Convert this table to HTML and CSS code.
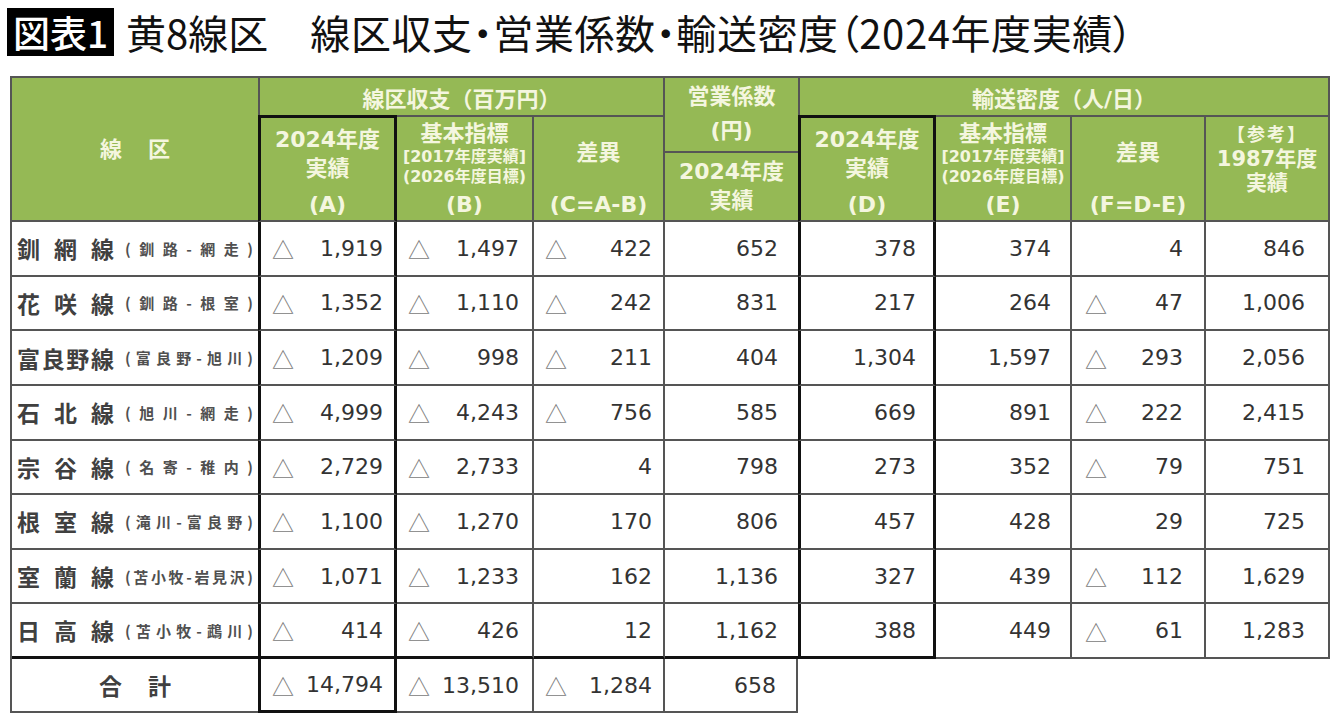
FILE: index.html
```html
<!DOCTYPE html>
<html lang="ja">
<head>
<meta charset="utf-8">
<title>黄8線区 線区収支・営業係数・輸送密度</title>
<link rel="stylesheet" href="styles.css">
</head>
<body>
<div class="title">
  <span class="badge">図表1</span>
  <span class="ttl">黄8線区<span class="ttl-gap">線区収支・営業係数・輸送密度（2024年度実績）</span></span>
</div>

<div class="grid">
  <div class="h h-sen"><span>線</span><span>区</span></div>
  <div class="h h-shushi">線区収支（百万円）</div>
  <div class="h h-eig1"><span class="l1">営業係数</span><span class="l1">(円)</span></div>
  <div class="h h-yuso">輸送密度（人/日）</div>

  <div class="h h-a"><span class="l">2024年度</span><span class="l">実績</span><span class="x">(A)</span></div>
  <div class="h h-b"><span class="l2">基本指標</span><span class="s">[2017年度実績]</span><span class="s">(2026年度目標)</span><span class="x">(B)</span></div>
  <div class="h h-c"><span class="l3">差異</span><span class="x">(C=A-B)</span></div>
  <div class="h h-eig2"><span class="l">2024年度</span><span class="l">実績</span></div>
  <div class="h h-d"><span class="l">2024年度</span><span class="l">実績</span><span class="x">(D)</span></div>
  <div class="h h-e"><span class="l2">基本指標</span><span class="s">[2017年度実績]</span><span class="s">(2026年度目標)</span><span class="x">(E)</span></div>
  <div class="h h-f"><span class="l3">差異</span><span class="x">(F=D-E)</span></div>
  <div class="h h-ref"><span class="s2">【参考】</span><span class="l4">1987年度</span><span class="l4">実績</span></div>

  <!-- 釧網線 -->
  <div class="lab"><span class="nm"><span>釧</span><span>網</span><span>線</span></span><span class="sub"><span>(</span><span>釧</span><span>路</span><span>-</span><span>網</span><span>走</span><span>)</span></span></div>
  <div class="c ka"><span class="tri">△</span><span class="n">1,919</span></div>
  <div class="c kb"><span class="tri">△</span><span class="n">1,497</span></div>
  <div class="c kc"><span class="tri">△</span><span class="n">422</span></div>
  <div class="c ke"><span class="n">652</span></div>
  <div class="c kd"><span class="n">378</span></div>
  <div class="c kee"><span class="n">374</span></div>
  <div class="c kf"><span class="n">4</span></div>
  <div class="c kr"><span class="n">846</span></div>

  <!-- 花咲線 -->
  <div class="lab"><span class="nm"><span>花</span><span>咲</span><span>線</span></span><span class="sub"><span>(</span><span>釧</span><span>路</span><span>-</span><span>根</span><span>室</span><span>)</span></span></div>
  <div class="c ka"><span class="tri">△</span><span class="n">1,352</span></div>
  <div class="c kb"><span class="tri">△</span><span class="n">1,110</span></div>
  <div class="c kc"><span class="tri">△</span><span class="n">242</span></div>
  <div class="c ke"><span class="n">831</span></div>
  <div class="c kd"><span class="n">217</span></div>
  <div class="c kee"><span class="n">264</span></div>
  <div class="c kf"><span class="tri">△</span><span class="n">47</span></div>
  <div class="c kr"><span class="n">1,006</span></div>

  <!-- 富良野線 -->
  <div class="lab"><span class="nm"><span>富</span><span>良</span><span>野</span><span>線</span></span><span class="sub"><span>(</span><span>富</span><span>良</span><span>野</span><span>-</span><span>旭</span><span>川</span><span>)</span></span></div>
  <div class="c ka"><span class="tri">△</span><span class="n">1,209</span></div>
  <div class="c kb"><span class="tri">△</span><span class="n">998</span></div>
  <div class="c kc"><span class="tri">△</span><span class="n">211</span></div>
  <div class="c ke"><span class="n">404</span></div>
  <div class="c kd"><span class="n">1,304</span></div>
  <div class="c kee"><span class="n">1,597</span></div>
  <div class="c kf"><span class="tri">△</span><span class="n">293</span></div>
  <div class="c kr"><span class="n">2,056</span></div>

  <!-- 石北線 -->
  <div class="lab"><span class="nm"><span>石</span><span>北</span><span>線</span></span><span class="sub"><span>(</span><span>旭</span><span>川</span><span>-</span><span>網</span><span>走</span><span>)</span></span></div>
  <div class="c ka"><span class="tri">△</span><span class="n">4,999</span></div>
  <div class="c kb"><span class="tri">△</span><span class="n">4,243</span></div>
  <div class="c kc"><span class="tri">△</span><span class="n">756</span></div>
  <div class="c ke"><span class="n">585</span></div>
  <div class="c kd"><span class="n">669</span></div>
  <div class="c kee"><span class="n">891</span></div>
  <div class="c kf"><span class="tri">△</span><span class="n">222</span></div>
  <div class="c kr"><span class="n">2,415</span></div>

  <!-- 宗谷線 -->
  <div class="lab"><span class="nm"><span>宗</span><span>谷</span><span>線</span></span><span class="sub"><span>(</span><span>名</span><span>寄</span><span>-</span><span>稚</span><span>内</span><span>)</span></span></div>
  <div class="c ka"><span class="tri">△</span><span class="n">2,729</span></div>
  <div class="c kb"><span class="tri">△</span><span class="n">2,733</span></div>
  <div class="c kc"><span class="n">4</span></div>
  <div class="c ke"><span class="n">798</span></div>
  <div class="c kd"><span class="n">273</span></div>
  <div class="c kee"><span class="n">352</span></div>
  <div class="c kf"><span class="tri">△</span><span class="n">79</span></div>
  <div class="c kr"><span class="n">751</span></div>

  <!-- 根室線 -->
  <div class="lab"><span class="nm"><span>根</span><span>室</span><span>線</span></span><span class="sub"><span>(</span><span>滝</span><span>川</span><span>-</span><span>富</span><span>良</span><span>野</span><span>)</span></span></div>
  <div class="c ka"><span class="tri">△</span><span class="n">1,100</span></div>
  <div class="c kb"><span class="tri">△</span><span class="n">1,270</span></div>
  <div class="c kc"><span class="n">170</span></div>
  <div class="c ke"><span class="n">806</span></div>
  <div class="c kd"><span class="n">457</span></div>
  <div class="c kee"><span class="n">428</span></div>
  <div class="c kf"><span class="n">29</span></div>
  <div class="c kr"><span class="n">725</span></div>

  <!-- 室蘭線 -->
  <div class="lab"><span class="nm"><span>室</span><span>蘭</span><span>線</span></span><span class="sub"><span>(</span><span>苫</span><span>小</span><span>牧</span><span>-</span><span>岩</span><span>見</span><span>沢</span><span>)</span></span></div>
  <div class="c ka"><span class="tri">△</span><span class="n">1,071</span></div>
  <div class="c kb"><span class="tri">△</span><span class="n">1,233</span></div>
  <div class="c kc"><span class="n">162</span></div>
  <div class="c ke"><span class="n">1,136</span></div>
  <div class="c kd"><span class="n">327</span></div>
  <div class="c kee"><span class="n">439</span></div>
  <div class="c kf"><span class="tri">△</span><span class="n">112</span></div>
  <div class="c kr"><span class="n">1,629</span></div>

  <!-- 日高線 -->
  <div class="lab last"><span class="nm"><span>日</span><span>高</span><span>線</span></span><span class="sub"><span>(</span><span>苫</span><span>小</span><span>牧</span><span>-</span><span>鵡</span><span>川</span><span>)</span></span></div>
  <div class="c ka last"><span class="tri">△</span><span class="n">414</span></div>
  <div class="c kb last"><span class="tri">△</span><span class="n">426</span></div>
  <div class="c kc last"><span class="n">12</span></div>
  <div class="c ke last"><span class="n">1,162</span></div>
  <div class="c kd last"><span class="n">388</span></div>
  <div class="c kee"><span class="n">449</span></div>
  <div class="c kf"><span class="tri">△</span><span class="n">61</span></div>
  <div class="c kr"><span class="n">1,283</span></div>

  <!-- 合計 -->
  <div class="tot"><span>合</span><span>計</span></div>
  <div class="c ka last"><span class="tri">△</span><span class="n">14,794</span></div>
  <div class="c kb"><span class="tri">△</span><span class="n">13,510</span></div>
  <div class="c kc"><span class="tri">△</span><span class="n">1,284</span></div>
  <div class="c ke tot-e"><span class="n">658</span></div>
</div>
</body>
</html>
```

FILE: styles.css
```css
html, body {
  margin: 0;
  padding: 0;
  background: #ffffff;
}

body {
  font-family: "Noto Sans CJK JP", "Noto Sans", sans-serif;
  color: #111;
}

/* ---------- title ---------- */
.title {
  display: flex;
  align-items: center;
  height: 64px;
  padding-left: 7px;
}

.badge {
  background: #000;
  color: #fff;
  font-weight: 500;
  font-size: 37px;
  line-height: 48px;
  padding: 0 6px;
}

.ttl {
  font-size: 40px;
  font-weight: 400;
  margin-left: 12px;
  line-height: 48px;
  font-feature-settings: "palt";
  color: #111;
}

.ttl-gap {
  margin-left: 42px;
  letter-spacing: 0.6px;
}

/* ---------- grid table ---------- */
.grid {
  display: grid;
  width: max-content;
  margin: 12px 0 0 10px;
  border-left: 2px solid #555;
  border-top: 2px solid #555;
  grid-template-columns: 246px 139px 137px 131px 133px 138px 136px 134px 124px;
  grid-template-rows: 37px 38px 69px repeat(8, 54.625px) 54px;
}

.grid > div {
  box-sizing: border-box;
  border-right: 2px solid #555;
  border-bottom: 2px solid #555;
}

/* header cells */
.h {
  background: #95b955;
  color: #f4f6df;
  font-family: "DejaVu Sans", "Noto Sans CJK JP", sans-serif;
  font-weight: 700;
  font-size: 22px;
  display: flex;
  flex-direction: column;
  align-items: center;
  white-space: nowrap;
}

.h-sen {
  grid-column: 1;
  grid-row: 1 / 4;
  flex-direction: row;
  justify-content: center;
  gap: 26px;
  padding-bottom: 4px;
  border-right: 0 !important;
}

.h-sen span {
  align-self: center;
}

.h-shushi {
  grid-column: 2 / 5;
  grid-row: 1;
  justify-content: center;
  border-left: 2px solid #555;
  border-bottom: 0 !important;
}

.h-yuso {
  grid-column: 6 / 10;
  grid-row: 1;
  justify-content: center;
  border-left: 2px solid #555;
  border-bottom: 0 !important;
}

.h-eig1 {
  grid-column: 5;
  grid-row: 1 / 3;
  border-right: 0 !important;
  padding-top: 2px;
}

.h-eig2 {
  grid-column: 5;
  grid-row: 3;
  border-right: 0 !important;
  padding-top: 4px;
}

.h-a { grid-column: 2; grid-row: 2 / 4; }
.h-b { grid-column: 3; grid-row: 2 / 4; }
.h-c { grid-column: 4; grid-row: 2 / 4; }
.h-d { grid-column: 6; grid-row: 2 / 4; }
.h-e { grid-column: 7; grid-row: 2 / 4; }
.h-f { grid-column: 8; grid-row: 2 / 4; }
.h-ref { grid-column: 9; grid-row: 2 / 4; }

.h-a, .h-d {
  border-top: 3px solid #111;
  border-left: 3px solid #111;
  border-right: 3px solid #111 !important;
  padding-top: 7px;
}

.h-b, .h-c, .h-e, .h-f, .h-ref {
  border-top: 2px solid #555;
}

.h-b, .h-e { padding-top: 4px; }
.h-c, .h-f { padding-top: 22px; }
.h-ref { padding-top: 6px; }

.h .l  { line-height: 29px; }
.h .l1 { line-height: 34px; }
.h .l2 { line-height: 26px; }
.h .l3 { line-height: 28px; }
.h .l4 { line-height: 24px; font-size: 21px; }
.h .s  { line-height: 20px; font-size: 16px; }
.h .s2 { line-height: 24px; font-size: 18px; letter-spacing: 2px; }
.h .x  { line-height: 30px; margin-top: auto; }

/* row labels */
.lab {
  display: flex;
  align-items: center;
  padding-left: 5px;
  border-right: 0 !important;
  font-weight: 700;
  color: #404040;
}

.nm {
  display: flex;
  justify-content: space-between;
  width: 97px;
  font-size: 23px;
}

.sub {
  display: flex;
  justify-content: space-between;
  width: 128px;
  margin-left: 11px;
  font-size: 15px;
  color: #505050;
}

.tot {
  display: flex;
  align-items: center;
  justify-content: center;
  gap: 26px;
  font-size: 23px;
  font-weight: 700;
  color: #404040;
  border-right: 0 !important;
}

/* data cells */
.c {
  display: flex;
  align-items: center;
  font-family: "DejaVu Sans", "Noto Sans CJK JP", sans-serif;
  font-size: 22px;
  color: #333;
  padding-left: 11px;
}

.c .tri {
  font-family: "Noto Sans CJK JP", sans-serif;
  color: #7a7a7a;
  font-size: 22px;
}

.c .n {
  margin-left: auto;
}

.ka, .kd {
  border-left: 3px solid #111;
  border-right: 3px solid #111 !important;
}

.ka  { padding-right: 11px; }
.kb  { padding-right: 13px; }
.kc  { padding-right: 11px; }
.ke  { padding-right: 20px; border-right: 0 !important; }
.kd  { padding-right: 17px; }
.kee { padding-right: 19px; }
.kf  { padding-right: 21px; padding-left: 13px; }
.kr  { padding-right: 23px; }

.tot-e {
  border-right: 2px solid #555 !important;
}

.grid > .last {
  border-bottom: 3px solid #111;
}
```
